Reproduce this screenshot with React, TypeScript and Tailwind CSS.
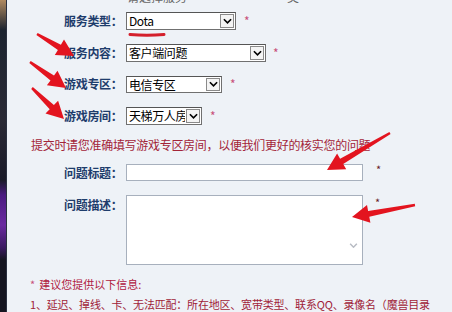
import React from "react";

const font = { fontFamily: '"Noto Sans CJK SC", "Noto Sans", sans-serif' };

function Chevron({ className }: { className?: string }) {
  return (
    <svg viewBox="0 0 10 6" className={className} fill="none">
      <path d="M1 1 L5 5 L9 1" stroke="currentColor" strokeWidth="1.8" />
    </svg>
  );
}

function FakeSelect({ value, width, height }: { value: string; width: string; height: string }) {
  return (
    <div className={`flex ${width} ${height} border border-[#707070] border-t-[#555] bg-white`}>
      <div className="flex-1 overflow-hidden whitespace-nowrap pl-[2px] text-[12px] leading-[16px] tracking-[-0.4px] text-black">
        {value}
      </div>
      <div className="m-[1px] flex w-[14px] items-center justify-center border border-[#8a8a8a] bg-[#f4f4f4] text-black">
        <Chevron className="h-[6px] w-[9px]" />
      </div>
    </div>
  );
}

function Label({ children }: { children: React.ReactNode }) {
  return (
    <div className="ml-[34px] w-[62px] whitespace-nowrap text-[12px] font-bold tracking-[-0.3px] text-[#1e3d6c]">
      {children}
    </div>
  );
}

function Star({ className }: { className?: string }) {
  return <span className={`text-[12px] text-[#c8507a] ${className ?? ""}`}>*</span>;
}

// arrow polygon from tail to tip
function arrow(tx: number, ty: number, hx: number, hy: number) {
  const dx = hx - tx;
  const dy = hy - ty;
  const len = Math.hypot(dx, dy);
  const ux = dx / len;
  const uy = dy / len;
  const nx = -uy;
  const ny = ux;
  const headLen = 17;
  const headW = 9;
  const bx = hx - ux * headLen;
  const by = hy - uy * headLen;
  const p = (x: number, y: number) => `${x.toFixed(1)},${y.toFixed(1)}`;
  return [
    p(tx + nx * 1.2, ty + ny * 1.2),
    p(bx + nx * 3, by + ny * 3),
    p(bx + nx * headW, by + ny * headW),
    p(hx, hy),
    p(bx - nx * headW, by - ny * headW),
    p(bx - nx * 3, by - ny * 3),
    p(tx - nx * 1.2, ty - ny * 1.2),
  ].join(" ");
}

const arrows = [
  [37, 34, 74, 56],
  [30, 62, 66, 88],
  [32, 88, 64, 119],
  [390, 133, 327, 170],
  [415, 205, 352, 217],
];

export default function App() {
  return (
    <div className="relative flex h-[312px] w-[452px] overflow-hidden bg-[#eef2f7]" style={font}>
      <div className="w-[6px] bg-[linear-gradient(to_bottom,#b08a60_0px,#1c2430_30px,#2a2a35_120px,#1a1a28_180px,#4a1a80_195px,#6a2aa0_225px,#3a1a60_248px,#151520_260px,#151520_312px)]" />
      <div className="w-[1px] bg-[#2a3040]" />
      <div className="flex flex-1 flex-col pl-[23px]">
        <div className="h-[7px] overflow-hidden">
          <div className="-mt-[10px] ml-[97px] flex gap-[100px] text-[12px] leading-[14px] text-[#666]">
            <span>请选择服务</span>
            <span>类</span>
          </div>
        </div>

        <div className="mt-[7px] flex h-[18px] items-center">
          <Label>服务类型：</Label>
          <FakeSelect value="Dota" width="w-[110px]" height="h-[18px]" />
          <Star className="ml-[8px]" />
        </div>

        <div className="mt-[14px] flex h-[18px] items-center">
          <Label>服务内容：</Label>
          <FakeSelect value="客户端问题" width="w-[140px]" height="h-[18px]" />
          <Star className="ml-[7px]" />
        </div>

        <div className="mt-[13px] flex h-[18px] items-center">
          <Label>游戏专区：</Label>
          <FakeSelect value="电信专区" width="w-[96px]" height="h-[17px]" />
          <Star className="ml-[8px]" />
        </div>

        <div className="mt-[14px] flex h-[18px] items-center">
          <Label>游戏房间：</Label>
          <FakeSelect value="天梯万人房" width="w-[76px]" height="h-[18px]" />
          <Star className="ml-[8px]" />
        </div>

        <div className="mt-[12px] h-[16px] whitespace-nowrap pl-[1px] text-[12px] leading-[16px] tracking-[-0.3px] text-[#a32438]">
          提交时请您准确填写游戏专区房间，以便我们更好的核实您的问题
        </div>

        <div className="mt-[11px] flex h-[17px] items-center">
          <Label>问题标题：</Label>
          <div className="h-[17px] w-[237px] border border-[#a7b0bd] bg-white" />
          <span className="ml-[13px] -mt-[6px] text-[11px] text-[#6a1a2a]">*</span>
        </div>

        <div className="mt-[14px] flex h-[70px] items-start">
          <div className="pt-[1px]">
            <Label>问题描述：</Label>
          </div>
          <div className="relative h-[70px] w-[237px] border border-[#a7b0bd] bg-white">
            <Chevron className="absolute bottom-[16px] right-[4px] h-[5px] w-[9px] text-[#b8bcc4]" />
          </div>
          <span className="ml-[12px] -mt-[1px] text-[11px] text-[#6a1a2a]">*</span>
        </div>

        <div className="mt-[11px] h-[16px] whitespace-nowrap text-[11px] leading-[16px] text-[#b02040]">
          <span className="mr-[4px] text-[#c8507a]">*</span>建议您提供以下信息:
        </div>
        <div className="mt-[4px] h-[16px] whitespace-nowrap text-[11px] leading-[16px] tracking-[-0.2px] text-[#a01c38]">
          1、延迟、掉线、卡、无法匹配：所在地区、宽带类型、联系QQ、录像名（魔兽目录
        </div>
      </div>

      <svg className="pointer-events-none absolute inset-0 h-[312px] w-[452px]" viewBox="0 0 452 312">
        <path d="M130 34.5 Q147 36 164 34.5" stroke="#d4202c" strokeWidth="3" strokeLinecap="round" fill="none" />
        {arrows.map(([a, b, c, d], i) => (
          <polygon key={i} points={arrow(a, b, c, d)} fill="#e3141f" />
        ))}
      </svg>
    </div>
  );
}
